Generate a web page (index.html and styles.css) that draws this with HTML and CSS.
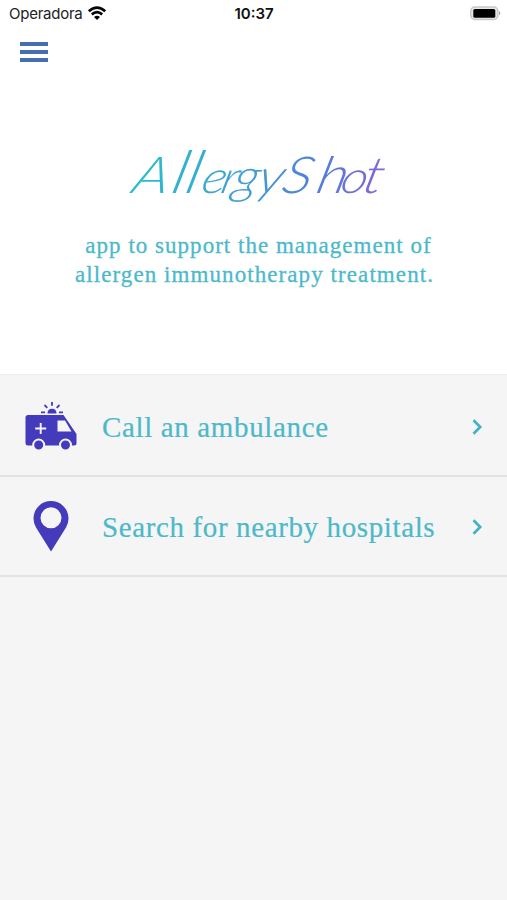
FILE: index.html
```html
<!DOCTYPE html>
<html lang="en">
<head>
<meta charset="utf-8">
<title>AllergyShot</title>
<link rel="stylesheet" href="styles.css">
</head>
<body>
<header class="status">
  <div class="carrier"><span>Operadora</span>
    <svg width="20" height="15" viewBox="0 0 20 15" fill="none" stroke="#050505" stroke-width="2.7"><path d="M1.8 5.3Q10-2 18.2 5.3M4.800 8.400Q10 4 15.200 8.400"/><path d="M7 10.900Q10 8.500 13 10.900L10 14Z" fill="#050505" stroke="none"/></svg>
  </div>
  <time class="clock">10:37</time>
  <svg class="battery" width="31" height="16" viewBox="0 0 31 16"><rect x=".8" y="1" width="27" height="12.400" rx="4" fill="#e8e8e8" stroke="#c8c8c8" stroke-width="1.500"/><rect x="3.300" y="3" width="22" height="8.800" rx="1.600"/><path d="M29 5q2.600 2.200 0 4.400z" fill="#aaa"/></svg>
</header>
<nav class="bar"><button class="menu" aria-label="Menu"><i></i><i></i><i></i></button></nav>
<section class="hero">
  <h1 class="logo">
    <svg width="270" height="80" viewBox="0 0 270 80">
      <defs><linearGradient id="ink" gradientUnits="userSpaceOnUse" x1="4" x2="216" y1="0" y2="0"><stop offset="0" stop-color="#28bfc9"/><stop offset=".45" stop-color="#429fd5"/><stop offset=".75" stop-color="#527edc"/><stop offset="1" stop-color="#8068d3"/></linearGradient></defs>
      <g transform="translate(0 53) skewX(-14) scale(1.15 1)"><text class="script" y="0" x="3 37 49 63 80 90.500 111.500 133 163 184 203"><tspan class="cap wide">A</tspan><tspan class="tall">ll</tspan>er<tspan class="tail">gy</tspan><tspan class="cap">Sh</tspan>o<tspan class="cap">t</tspan></text></g>
    </svg>
  </h1>
  <p class="tagline"><span class="line-one">app to support the management of</span><span class="line-two">allergen immunotherapy treatment.</span></p>
</section>
<main class="list">
  <a class="row">
    <svg class="icon" width="52" height="50" viewBox="0 0 52 50"><path fill="#443abc" d="M3 14H38.500L51.500 33V42Q51.500 44.500 49 44.500H3Q.5 44.500 .5 42V16.500Q.5 14 3 14Z"/><path fill="#443abc" d="M22.500 12.500Q22.500 7.800 27 7.800T31.500 12.500Z"/><path stroke="#443abc" stroke-width="1.800" d="M27 1V4.700M19.500 4L22.300 6.800M34.500 4L31.700 6.800M16 11.300H20M34 11.300H38"/><path fill="#f5f5f5" d="M32.500 19.500H40L46.500 30.500H32.500Z"/><path stroke="#f5f5f5" stroke-width="1.900" d="M15.700 22V33M10.200 27.500H21.200"/><g fill="#443abc" stroke="#f5f5f5" stroke-width="2"><circle cx="13.700" cy="44" r="5.500"/><circle cx="40.500" cy="44" r="5.500"/></g></svg>
    <span class="label label-call">Call an ambulance</span>
    <svg class="chevron" width="12" height="18" viewBox="0 0 12 18"><path d="M2.500 2.300L9.200 9L2.500 15.700"/></svg>
  </a>
  <a class="row">
    <svg class="icon" width="52" height="52" viewBox="0 0 52 52"><path fill="#443abc" fill-rule="evenodd" d="M26 51.500L11 27.500Q8.500 23 8.500 18.500A17.500 17.500 0 0 1 43.500 18.500Q43.500 23 41 27.500ZM26 7.300A10.500 10.500 0 1 0 26 28.300A10.500 10.500 0 1 0 26 7.300Z"/></svg>
    <span class="label label-search">Search for nearby hospitals</span>
    <svg class="chevron" width="12" height="18" viewBox="0 0 12 18"><path d="M2.500 2.300L9.200 9L2.500 15.700"/></svg>
  </a>
</main>
</body>
</html>
```
FILE: styles.css
```css
* { box-sizing: border-box; }
body { margin: 0; height: 900px; overflow: hidden; display: flex; flex-direction: column; background: #fff; font-family: Inter, "Liberation Sans", sans-serif; }
.status { height: 28px; display: grid; grid-template-columns: 1fr auto 1fr; align-items: center; padding: 0 6px 1px 9px; color: #222; font-size: 15px; }
.carrier { display: flex; align-items: center; gap: 5px; letter-spacing: -.25px; }
.clock { font-weight: 600; color: #111; font-size: 15px; margin-right: 2px; }
.battery { justify-self: end; }
.bar { height: 48px; padding: 14px 20px; }
.menu { display: flex; flex-direction: column; gap: 4px; padding: 0; border: 0; background: none; width: 28px; }
.menu i { height: 4px; width: 28px; background: #4470b2; }
.hero { height: 298px; padding-top: 64px; text-align: center; }
.logo { margin: 0 0 0 127px; height: 76px; text-align: left; }
.logo svg { display: block; overflow: visible; }
.script { font-family: Lato, "Open Sans", sans-serif; font-style: italic; font-weight: 300; font-size: 45px; fill: url(#ink); }
.cap { font-size: 51px; }
.tail { font-size: 48px; }
.tall { font-size: 59px; }
.tagline { margin: 15px 0 0; color: #4bb9c9; font-family: "Liberation Serif", serif; font-size: 23px; line-height: 29px; -webkit-text-stroke: .3px #4bb9c9; }
.tagline span { display: block; white-space: nowrap; }
.line-one { letter-spacing: 1.020px; padding-left: 10px; }
.line-two { letter-spacing: 1.080px; padding-left: 2px; }
.list { flex: 1; background: #f5f5f5; border-top: 1px solid #eee; }
.row { height: 102px; display: flex; align-items: center; padding: 2px 24px 0 25px; border-bottom: 2px solid #e2e2e2; }
.row + .row { height: 100px; padding-top: 0; }
.icon { flex: none; margin-right: 25px; }
.label { flex: 1; padding-top: 2px; white-space: nowrap; color: #4bb9c9; font-family: "Liberation Serif", serif; font-size: 29px; -webkit-text-stroke: .2px #4bb9c9; }
.label-call { letter-spacing: .64px; }
.label-search { letter-spacing: .62px; }
.chevron { flex: none; margin-top: 1px; fill: none; stroke: #43b3c4; stroke-width: 2.700; }
```
